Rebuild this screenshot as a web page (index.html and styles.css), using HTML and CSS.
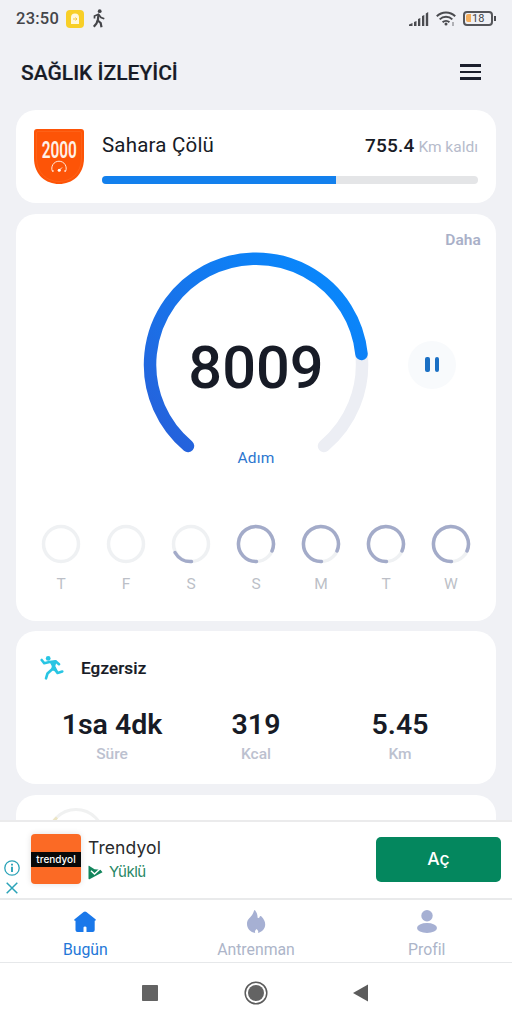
FILE: index.html
```html
<!DOCTYPE html>
<html lang="tr">
<head>
    <meta charset="UTF-8">
    <meta name="viewport" content="width=device-width, initial-scale=1.0">
    <title>Sağlık İzleyici</title>
    <link rel="stylesheet" href="styles.css">
</head>
<body>
    <div class="status-bar">
        <span class="clock">23:50</span>
        <svg class="app-badge" width="18" height="18" viewBox="0 0 18 18">
            <rect width="18" height="18" rx="4" fill="#f8cf27"/>
            <path d="M5 14V7.500a4 4 0 0 1 8 0V14z" fill="#fff8dc"/>
            <path d="M7 9h4M9.500 7.500L11 9L9.500 10.500" stroke="#f3c73a" fill="none"/>
        </svg>
        <svg class="walk" width="14" height="19" viewBox="0 0 14 19" fill="none" stroke="#444549" stroke-width="1.700">
            <circle cx="7.700" cy="2.200" r="1.900" fill="#444549" stroke="none"/>
            <path d="M2.500 9.500V7L6.500 5.300L9 8.500L12.300 9.800"/>
            <path d="M6.500 5.500L5.800 11.500L8.700 14L9.500 18.200M5.500 11.500L4.500 14.500L1.800 17.700" stroke-width="2.200"/>
        </svg>
        <div class="status-right">
            <svg width="20" height="14" viewBox="0 0 20 14" fill="#4a4b4f">
                <path d="M0 14V12.500L3.500 11V14Z"/>
                <path d="M5 14V10L7.500 9V14Z"/>
                <path d="M9 14V7L11.300 6V14Z"/>
                <path d="M13 14V4L15.300 3V14Z"/>
                <path d="M16.800 14V1.500L19.200 0V14Z"/>
            </svg>
            <svg width="20" height="15" viewBox="0 0 20 15" fill="none" stroke="#4a4b4f" stroke-width="2">
                <path d="M.8 5.200a13 13 0 0 1 18.400 0M3.700 8.400a9 9 0 0 1 12.600 0M6.600 11.300a5 5 0 0 1 6.800 0"/>
                <circle cx="10" cy="13" r="1.500" fill="#4a4b4f" stroke="none"/>
                <path d="M17 11v4" stroke-width="1.200" stroke="#85868a"/>
            </svg>
            <div class="battery"><i></i><span>18</span></div>
        </div>
    </div>

    <header class="header">
        <h1>SAĞLIK İZLEYİCİ</h1>
        <div class="menu"><i></i><i></i><i></i></div>
    </header>

    <main class="content">
        <section class="card trip">
            <div class="badge">
                <svg width="50" height="56" viewBox="0 0 50 56">
                    <path d="M3 0H47Q50 0 50 3V29C50 46 38 55 25 55S0 46 0 29V3Q0 0 3 0Z" fill="#fd5407"/>
                    <path d="M4 2.500H46Q47.500 2.500 47.500 4V29C47.500 44 37 52.500 25 52.500S2.500 44 2.500 29V4Q2.500 2.500 4 2.500Z" fill="none" stroke="#fe6a24" stroke-width=".6"/>
                    <path d="M18.500 42.500A7.200 7.200 0 1 1 31.500 42.500M18 42h2M30 42h2M25.500 41L28 38.500" fill="none" stroke="#ffe9dc" stroke-width="1"/>
                    <circle cx="25.200" cy="41.300" r="1.500" fill="#fff"/>
                </svg>
                <span>2000</span>
            </div>
            <div class="trip-body">
                <div class="trip-row">
                    <span class="trip-name">Sahara Çölü</span>
                    <span class="trip-left"><b>755.4</b> <span>Km kaldı</span></span>
                </div>
                <div class="progress"><div class="progress-fill" style="width: 62.200%"></div></div>
            </div>
        </section>

        <section class="card steps">
            <a class="more">Daha</a>
            <div class="gauge-row">
                <div class="gauge">
                    <svg width="226" height="208" viewBox="143 251 226 208" fill="none" stroke-width="12.500" stroke-linecap="round">
                        <defs>
                            <linearGradient id="blue" x1="0" y1="1" x2="1" y2="0">
                                <stop offset="0" stop-color="#265fda"/>
                                <stop offset=".2" stop-color="#2168e0"/>
                                <stop offset=".8" stop-color="#0b84f9"/>
                                <stop offset="1" stop-color="#078afd"/>
                            </linearGradient>
                        </defs>
                        <path d="M361.500 354A106 106 0 0 1 324 446" stroke="#eceef4"/>
                        <path d="M188 446A106 106 0 1 1 361.500 354" stroke="url(#blue)"/>
                    </svg>
                    <div class="count">8009</div>
                    <div class="unit">Adım</div>
                </div>
                <div class="pause"><i></i><i></i></div>
            </div>
            <div class="week">
                <div class="day">
                    <svg class="ring"><circle cx="20" cy="20" r="17.500"/></svg>
                    <span>T</span>
                </div>
                <div class="day">
                    <svg class="ring"><circle cx="20" cy="20" r="17.500"/></svg>
                    <span>F</span>
                </div>
                <div class="day">
                    <svg class="ring"><circle cx="20" cy="20" r="17.500"/><path d="M20.500 37.500A17.500 17.500 0 0 1 4 28.500"/></svg>
                    <span>S</span>
                </div>
                <div class="day">
                    <svg class="ring"><circle cx="20" cy="20" r="17.500"/><path d="M20.500 37.500A17.500 17.500 0 1 1 36 27"/></svg>
                    <span>S</span>
                </div>
                <div class="day">
                    <svg class="ring"><circle cx="20" cy="20" r="17.500"/><path d="M20.500 37.500A17.500 17.500 0 1 1 36 27"/></svg>
                    <span>M</span>
                </div>
                <div class="day">
                    <svg class="ring"><circle cx="20" cy="20" r="17.500"/><path d="M20.500 37.500A17.500 17.500 0 1 1 36 27"/></svg>
                    <span>T</span>
                </div>
                <div class="day">
                    <svg class="ring"><circle cx="20" cy="20" r="17.500"/><path d="M20.500 37.500A17.500 17.500 0 1 1 36 27"/></svg>
                    <span>W</span>
                </div>
            </div>
        </section>

        <section class="card exercise">
            <div class="exercise-title">
                <svg width="24" height="24" viewBox="0 0 24 24" fill="none" stroke="#28c5e3" stroke-width="2.600" stroke-linecap="round" stroke-linejoin="round">
                    <circle cx="8.200" cy="2.400" r="2.400" fill="#28c5e3" stroke="none"/>
                    <path d="M1.700 4L4.200 7.200L9.500 6L15.500 5.200L19 8.200"/>
                    <path d="M10.500 6.200L16 5.200L14.500 10L17 15L12 13.500L12.500 10Z" fill="#28c5e3" stroke-width="1.500"/>
                    <path d="M13 12.500L7.500 17.500L6 22.300M14.500 13L17.500 17L22.300 15.500"/>
                </svg>
                <h2>Egzersiz</h2>
            </div>
            <div class="stats">
                <div class="stat"><b>1sa 4dk</b><span>Süre</span></div>
                <div class="stat"><b>319</b><span>Kcal</span></div>
                <div class="stat"><b>5.45</b><span>Km</span></div>
            </div>
        </section>

        <section class="card next">
            <svg width="60" height="60" viewBox="0 0 60 60" fill="none" stroke-width="3">
                <circle cx="30" cy="30" r="27.500" stroke="#f0f1f1"/>
                <path d="M7 15A27.500 27.500 0 0 1 11 10.500" stroke="#ece5c4"/>
            </svg>
        </section>
    </main>

    <div class="ad">
        <div class="ad-marks">
            <svg width="16" height="16" viewBox="0 0 16 16" fill="none" stroke="#2ba3b8" stroke-width="1.300">
                <circle cx="8" cy="8" r="7.200"/>
                <path d="M8 6.800V12M8 3.800V5.500" stroke-width="1.900"/>
            </svg>
            <svg width="12" height="12" viewBox="0 0 12 12" stroke="#2ba3b8" stroke-width="1.500">
                <path d="M.7.7L11.300 11.300M11.300.7L.7 11.300"/>
            </svg>
        </div>
        <div class="ad-logo"><span>trendyol</span></div>
        <div class="ad-text">
            <div class="ad-name">Trendyol</div>
            <div class="ad-state">
                <svg width="15" height="15" viewBox="0 0 15 15">
                    <path d="M.5 1Q.5.5 1 .7L6.500 4.200L12.500 4.800L14.500 7.200L1.500 14.200Q.5 14.500 .5 13.500Z" fill="#12855c"/>
                    <path d="M3 5.800L6.500 9L13 3" fill="none" stroke="#fff" stroke-width="1.500"/>
                </svg>
                <span>Yüklü</span>
            </div>
        </div>
        <button class="ad-open">Aç</button>
    </div>

    <nav class="tabs">
        <a class="tab active">
            <svg width="24" height="24" viewBox="0 0 24 24" fill="#1a78ea">
                <path d="M10.600 2Q12 .9 13.400 2L22.800 9.600Q23.200 10.700 22 10.700H21.700V20Q21.700 22 19.700 22H13.500V17.500Q13.500 16.500 12 16.500T10.500 17.500V22H4.500Q2.500 22 2.500 20V10.700H1.800Q.8 10.500 1.300 9.600Z"/>
            </svg>
            <span>Bugün</span>
        </a>
        <a class="tab">
            <svg width="24" height="24" viewBox="0 0 24 24" fill="#a6b0d3">
                <path d="M11 .2C12.500 2 13.700 4.500 13.600 7.800C15.500 8.500 15.300 7 16 6.200C16.500 5.800 17 6 17.500 6.600C20 9.600 21.200 11.500 21.200 14.500C21.200 18.800 18 21.800 14 23C14.500 21.500 14.300 20.500 12.500 19C11 20.500 10.700 21.500 11.200 23C6.500 22.200 3 18.800 3 14C3 9.500 5.500 8.500 7.700 5.500C9 3.700 9.500 2.200 10.100.5Q10.500-.2 11 .2Z"/>
            </svg>
            <span>Antrenman</span>
        </a>
        <a class="tab">
            <svg width="24" height="24" viewBox="0 0 24 24" fill="#a6b0d3">
                <circle cx="12" cy="5.800" r="5.700"/>
                <ellipse cx="12" cy="18" rx="10" ry="5"/>
            </svg>
            <span>Profil</span>
        </a>
    </nav>

    <div class="system-nav">
        <svg width="24" height="24" viewBox="0 0 24 24"><rect x="4" y="4" width="16" height="16" rx=".8" fill="#636363"/></svg>
        <svg width="24" height="24" viewBox="0 0 24 24">
            <circle cx="12" cy="12" r="10.800" fill="none" stroke="#5c5c5c" stroke-width="1.500"/>
            <circle cx="12" cy="12" r="8" fill="#636363"/>
        </svg>
        <svg width="24" height="24" viewBox="0 0 24 24"><path d="M3 12L18 3.500V20.500Z" fill="#5c5c5c"/></svg>
    </div>
</body>
</html>
```

FILE: styles.css
```css
* {
    box-sizing: border-box;
}
body {
    margin: 0;
    height: 1024px;
    display: flex;
    flex-direction: column;
    overflow: hidden;
    background-color: #f0f1f5;
    font-family: Roboto, sans-serif;
    color: #171b26;
}
svg {
    display: block;
    flex-shrink: 0;
}

/* status bar */
.status-bar {
    height: 37px;
    display: flex;
    align-items: center;
    padding: 0 16px;
    color: #444549;
}
.clock {
    width: 43px;
    font-size: 16.5px;
    font-weight: 500;
    letter-spacing: 0.25px;
}
.app-badge {
    margin-left: 7px;
}
.walk {
    margin-left: 8px;
}
.status-right {
    margin-left: auto;
    display: flex;
    align-items: center;
    gap: 7px;
}
.battery {
    position: relative;
    width: 30px;
    height: 15px;
    margin: -1px 3px 0 0;
    border: 2px solid #55565a;
    border-radius: 4px;
    display: flex;
    align-items: center;
}
.battery::after {
    content: "";
    position: absolute;
    right: -5px;
    top: 3px;
    width: 2px;
    height: 5px;
    background-color: #4a4b4f;
}
.battery i {
    width: 5px;
    height: 8px;
    margin-left: 1px;
    background-color: #f3ad5c;
    border-radius: 2px 0 0 2px;
}
.battery span {
    margin-left: 1px;
    font-size: 11px;
    line-height: 11px;
}

/* header */
.header {
    height: 73px;
    display: flex;
    justify-content: space-between;
    padding: 22px 31px 0 21px;
}
.header h1 {
    margin: 0;
    font-size: 21px;
    font-weight: 500;
    line-height: 28px;
    -webkit-text-stroke: 0.2px #171b26;
}
.menu {
    width: 21px;
    padding-top: 5px;
    display: flex;
    flex-direction: column;
    gap: 4px;
}
.menu i {
    height: 2.5px;
    background-color: #1b1f2c;
}

/* cards */
.content {
    flex: 1;
    min-height: 0;
    overflow: hidden;
    padding: 0 16px;
    display: flex;
    flex-direction: column;
    gap: 10.5px;
}
.card {
    flex-shrink: 0;
    background-color: #fff;
    border-radius: 20px;
}
.trip {
    height: 93px;
    display: flex;
    padding: 19px 18px 0;
    gap: 18px;
}
.badge {
    display: grid;
    grid-template-columns: 50px;
    height: 56px;
}
.badge svg,
.badge span {
    grid-area: 1 / 1;
}
.badge span {
    justify-self: center;
    margin-top: 8px;
    font-size: 23px;
    font-weight: 600;
    line-height: 28px;
    color: #fff1e8;
    transform: scaleX(0.67);
}
.trip-body {
    flex: 1;
}
.trip-row {
    display: flex;
    justify-content: space-between;
    align-items: baseline;
    height: 47px;
    line-height: 32px;
}
.trip-name {
    font-size: 20.5px;
    letter-spacing: 0.2px;
}
.trip-left b {
    font-size: 19px;
    font-weight: 500;
    letter-spacing: 0.2px;
}
.trip-left span {
    font-size: 15.5px;
    color: #b6bbcb;
}
.progress {
    height: 8px;
    background-color: #e4e5e7;
    border-radius: 4px;
    overflow: hidden;
}
.progress-fill {
    height: 100%;
    background-color: #1380ed;
}

/* steps */
.steps {
    height: 407px;
    padding: 16px 15px 0;
    display: flex;
    flex-direction: column;
}
.more {
    align-self: flex-end;
    height: 21px;
    line-height: 21px;
    font-size: 15.5px;
    font-weight: 600;
    letter-spacing: 0.1px;
    color: #a9b0c8;
}
.gauge-row {
    display: grid;
    grid-template-columns: 1fr 226px 1fr;
    height: 274px;
}
.gauge {
    grid-column: 2;
    display: grid;
    justify-items: center;
    align-content: start;
}
.gauge svg,
.count,
.unit {
    grid-area: 1 / 1;
}
.count {
    margin-top: 82px;
    font-size: 59.5px;
    font-weight: 500;
    line-height: 70px;
}
.unit {
    margin-top: 197px;
    font-size: 15.5px;
    line-height: 20px;
    color: #2c76cf;
    letter-spacing: 0.2px;
}
.pause {
    width: 48px;
    height: 48px;
    margin: 90px 0 0 39px;
    border-radius: 50%;
    background-color: #f8fafc;
    display: flex;
    align-items: center;
    justify-content: center;
    gap: 5px;
}
.pause i {
    width: 4.5px;
    height: 15px;
    border-radius: 2px;
    background-color: #1b70c4;
}
.week {
    display: flex;
    justify-content: space-between;
    padding: 0 10px;
}
.day {
    width: 40px;
    margin-top: -1px;
    display: flex;
    flex-direction: column;
    align-items: center;
    font-size: 15.5px;
    line-height: 20px;
    color: #bcbfc7;
}
.day span {
    margin-top: 10px;
}
.ring {
    width: 40px;
    height: 40px;
    fill: none;
    stroke: #eff1f3;
    stroke-width: 3.5;
}
.ring path {
    stroke: #a3abc9;
    stroke-linecap: round;
}

/* exercise */
.exercise {
    height: 153px;
    padding: 24px 24px 0;
}
.exercise-title {
    display: flex;
    align-items: center;
    gap: 17px;
    height: 26px;
}
.exercise-title h2 {
    margin: 0;
    font-size: 17px;
    font-weight: 500;
    letter-spacing: 0.15px;
    -webkit-text-stroke: 0.2px #171b26;
}
.stats {
    display: flex;
    margin-top: 26px;
}
.stat {
    flex: 1;
    display: flex;
    flex-direction: column;
    align-items: center;
}
.stat b {
    font-size: 28.5px;
    font-weight: 600;
    line-height: 36px;
}
.stat span {
    font-size: 15.5px;
    font-weight: 500;
    line-height: 22px;
    color: #bcc1cf;
}
.next {
    height: 100px;
    padding: 12px 30px;
}

/* ad banner */
.ad {
    height: 80px;
    background-color: #fff;
    border-top: 2px solid #ebebec;
    border-bottom: 2px solid #e9eaeb;
    display: flex;
    padding: 0 11px 0 3px;
}
.ad-marks {
    width: 17px;
    padding-top: 38px;
    display: flex;
    flex-direction: column;
    align-items: center;
    gap: 6px;
}
.ad-logo {
    width: 50px;
    height: 50px;
    margin: 12px 0 0 11px;
    padding-top: 18px;
    background-color: #fb6a25;
    border-radius: 4px;
    box-shadow: 0 0 6px rgba(0, 0, 0, 0.12);
}
.ad-logo span {
    display: block;
    height: 15px;
    background-color: #080808;
    color: #fff;
    font-family: Inter, sans-serif;
    font-size: 10px;
    font-weight: 500;
    line-height: 14px;
    text-align: center;
}
.ad-text {
    margin: 14px 0 0 7px;
    font-family: Inter, sans-serif;
}
.ad-name {
    font-size: 17.5px;
    line-height: 24px;
    color: #292a2d;
    letter-spacing: 0.1px;
}
.ad-state {
    display: flex;
    align-items: center;
    gap: 6px;
    line-height: 24px;
    font-size: 15px;
    letter-spacing: -0.5px;
    color: #288765;
}
.ad-open {
    width: 125px;
    height: 45px;
    margin: 15px 0 0 auto;
    padding: 0 0 2px;
    border: none;
    border-radius: 5px;
    background-color: #04875e;
    color: #fff;
    font-family: Inter, sans-serif;
    font-size: 17.5px;
    font-weight: 500;
}

/* bottom tabs */
.tabs {
    height: 63px;
    display: flex;
    background-color: #fff;
    border-bottom: 1px solid #e6e8ea;
}
.tab {
    flex: 1;
    padding-top: 10px;
    display: flex;
    flex-direction: column;
    align-items: center;
    font-size: 15.8px;
    line-height: 20px;
    color: #adb5c9;
    gap: 6px;
}
.tab.active {
    color: #2477d8;
}
.system-nav {
    height: 61px;
    padding-bottom: 1px;
    display: flex;
    justify-content: center;
    align-items: center;
    gap: 82px;
    background-color: #fff;
}
```
